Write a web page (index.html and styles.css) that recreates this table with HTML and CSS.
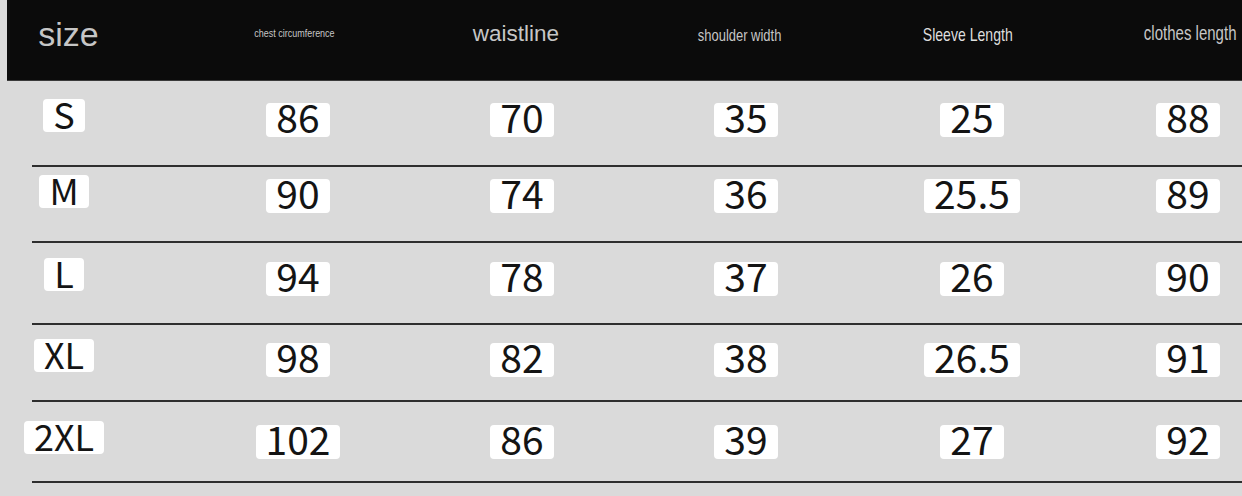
FILE: index.html
```html
<!DOCTYPE html>
<html lang="en">
<head>
<meta charset="utf-8">
<title>Size chart</title>
<link rel="stylesheet" href="styles.css">
</head>
<body>
<div class="chart">
  <div class="head">
    <div class="hc hc-size"><span class="ht t-size">size</span></div>
    <div class="hc"><span class="ht t-chest">chest circumference</span></div>
    <div class="hc"><span class="ht t-waist">waistline</span></div>
    <div class="hc"><span class="ht t-shoulder">shoulder width</span></div>
    <div class="hc"><span class="ht t-sleeve">Sleeve Length</span></div>
    <div class="hc hc-last"><span class="ht t-clothes">clothes length</span></div>
  </div>

  <div class="row r1">
    <div class="cell cell-size"><span class="lbl">S</span></div>
    <div class="cell"><span class="val">86</span></div>
    <div class="cell"><span class="val">70</span></div>
    <div class="cell"><span class="val">35</span></div>
    <div class="cell"><span class="val">25</span></div>
    <div class="cell cell-last"><span class="val">88</span></div>
  </div>
  <div class="row r2">
    <div class="cell cell-size"><span class="lbl">M</span></div>
    <div class="cell"><span class="val">90</span></div>
    <div class="cell"><span class="val">74</span></div>
    <div class="cell"><span class="val">36</span></div>
    <div class="cell"><span class="val">25.5</span></div>
    <div class="cell cell-last"><span class="val">89</span></div>
  </div>
  <div class="row r3">
    <div class="cell cell-size"><span class="lbl">L</span></div>
    <div class="cell"><span class="val">94</span></div>
    <div class="cell"><span class="val">78</span></div>
    <div class="cell"><span class="val">37</span></div>
    <div class="cell"><span class="val">26</span></div>
    <div class="cell cell-last"><span class="val">90</span></div>
  </div>
  <div class="row r4">
    <div class="cell cell-size"><span class="lbl">XL</span></div>
    <div class="cell"><span class="val">98</span></div>
    <div class="cell"><span class="val">82</span></div>
    <div class="cell"><span class="val">38</span></div>
    <div class="cell"><span class="val">26.5</span></div>
    <div class="cell cell-last"><span class="val">91</span></div>
  </div>
  <div class="row r5">
    <div class="cell cell-size"><span class="lbl">2XL</span></div>
    <div class="cell"><span class="val">102</span></div>
    <div class="cell"><span class="val">86</span></div>
    <div class="cell"><span class="val">39</span></div>
    <div class="cell"><span class="val">27</span></div>
    <div class="cell cell-last"><span class="val">92</span></div>
  </div>
</div>
</body>
</html>
```

FILE: styles.css
```css
html, body {
  margin: 0;
  padding: 0;
  background: #dadada;
}

.chart {
  width: 1242px;
  height: 496px;
  overflow: hidden;
  background: #dadada;
}

/* header bar */
.head {
  display: grid;
  grid-template-columns: 179px 224px 224px 224px 228px minmax(0, 1fr);
  align-items: start;
  margin-left: 7px;
  height: 81px;
  background: #0b0b0b;
  border-bottom: 1px solid #3a3a3a;
  box-sizing: border-box;
}

.hc {
  display: flex;
  justify-content: center;
  min-width: 0;
}

.hc-size { padding-right: 58px; }
.hc-last { padding-left: 48px; }

.ht {
  display: inline-block;
  flex: none;
  font-family: "Liberation Sans", Arial, sans-serif;
  color: #c6c6c6;
  line-height: 1;
  white-space: nowrap;
}

.t-size {
  font-size: 34px;
  margin-top: 17px;
  transform: translateX(1px);
}
.t-chest {
  font-size: 11.5px;
  margin-top: 28px;
  transform: translateX(-4px) scaleX(.78);
}
.t-waist {
  font-size: 22.5px;
  margin-top: 23px;
  transform: translateX(-6px);
}
.t-shoulder {
  font-size: 16px;
  margin-top: 27.5px;
  transform: translateX(-6px) scaleX(.81);
}
.t-sleeve {
  font-size: 19px;
  margin-top: 25px;
  color: #dedede;
  transform: translateX(-4px) scaleX(.74);
}
.t-clothes {
  font-size: 19.5px;
  margin-top: 23.5px;
  transform: translateX(2px) scaleX(.77);
}

/* data rows */
.row {
  display: grid;
  grid-template-columns: 186px 224px 224px 224px 228px minmax(0, 1fr);
  align-items: start;
  box-sizing: border-box;
  background: linear-gradient(#2e2e2e, #2e2e2e) right bottom / calc(100% - 32px) 2px no-repeat;
}

.r1 { height: 86px; padding-top: 22px; }
.r2 { height: 76px; padding-top: 12px; }
.r3 { height: 82px; padding-top: 19px; }
.r4 { height: 77px; padding-top: 18px; }
.r5 { height: 81px; padding-top: 23px; }

.cell {
  display: flex;
  justify-content: center;
  align-items: flex-start;
  min-width: 0;
}

.cell-size { padding-right: 58px; }
.cell-last { padding-left: 48px; }

.val,
.lbl {
  display: inline-block;
  flex: none;
  background: #ffffff;
  border-radius: 4px;
  box-sizing: border-box;
  font-family: "Noto Sans CJK SC", "Noto Sans", sans-serif;
  color: #141414;
  white-space: nowrap;
}

.val {
  height: 34px;
  padding: 0 10px 7px;
  font-size: 39px;
  line-height: 27px;
}

.lbl {
  height: 33px;
  margin-top: -4px;
  padding: 0 10px 5px;
  font-size: 36px;
  line-height: 28px;
}
```
